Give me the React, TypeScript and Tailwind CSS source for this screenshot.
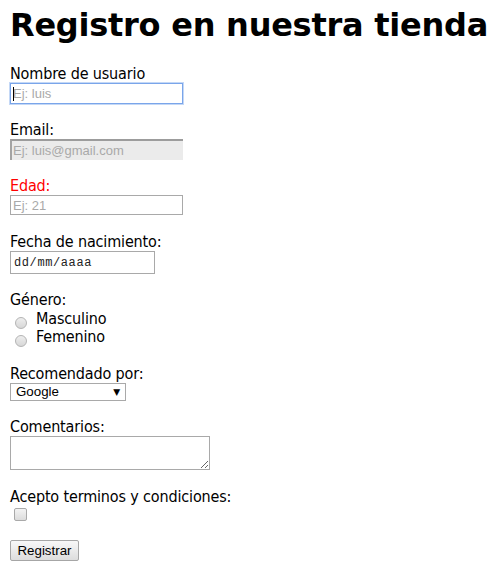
import { useState } from "react";

const labelFont = { fontFamily: '"DejaVu Sans Condensed", "DejaVu Sans", sans-serif' };

export default function App() {
    const [genero, setGenero] = useState("");
    const [acepto, setAcepto] = useState(false);

    return (
        <div className="min-h-[577px] bg-white px-[10px] pt-[7px] text-black">
            <h1 className="whitespace-nowrap text-[32px] font-bold leading-[37px] tracking-[-0.25px] font-['DejaVu_Sans',sans-serif]">
                Registro en nuestra tienda
            </h1>

            <form className="mt-[21px] text-[16px] leading-[18px] tracking-[-0.15px]" style={labelFont} onSubmit={(e) => e.preventDefault()}>
                {/* Nombre */}
                <label className="block h-[18px]">Nombre de usuario</label>
                <div className="relative w-[173px]">
                    <input
                        type="text"
                        placeholder="Ej: luis"
                        className="block h-[21px] w-[173px] border border-[#7aa5ea] px-[2px] text-[13px] tracking-normal font-['Liberation_Sans',sans-serif] shadow-[0_0_0_1px_#c4d8f6] outline-none placeholder:text-[#a9a9a9]"
                    />
                    <span className="absolute left-[3px] top-[4px] h-[14px] w-px bg-black" />
                </div>

                {/* Email */}
                <label className="mt-[17px] block h-[18px]">Email:</label>
                <input
                    type="email"
                    placeholder="Ej: luis@gmail.com"
                    readOnly
                    className="block h-[21px] w-[173px] border-l-2 border-t-2 border-l-[#a3a3a3] border-t-[#9c9c9c] bg-[#ebebeb] px-[1px] text-[13px] tracking-normal font-['Liberation_Sans',sans-serif] outline-none placeholder:text-[#a9a9a9]"
                />

                {/* Edad */}
                <label className="mt-[17px] block h-[18px] text-[#ff0000]">Edad:</label>
                <input
                    type="number"
                    placeholder="Ej: 21"
                    className="block h-[20px] w-[173px] border border-[#a9a9a9] px-[2px] text-[13px] tracking-normal font-['Liberation_Sans',sans-serif] outline-none placeholder:text-[#a9a9a9]"
                />

                {/* Fecha */}
                <label className="mt-[18px] block h-[18px]">Fecha de nacimiento:</label>
                <div className="flex h-[23px] w-[145px] items-center border border-[#a9a9a9] pl-[3px] text-[12px] tracking-[0.6px] font-['Liberation_Mono',monospace] text-[#222]">
                    dd/mm/aaaa
                </div>

                {/* Genero */}
                <label className="mt-[17px] block h-[18px]">Género:</label>
                <div className="mt-[1px] flex flex-col">
                    {["Masculino", "Femenino"].map((g) => (
                        <label key={g} className="flex h-[18px] items-start">
                            <input
                                type="radio"
                                name="genero"
                                checked={genero === g}
                                onChange={() => setGenero(g)}
                                className="ml-[5px] mr-[9px] mt-[7px] h-[12px] w-[12px] shrink-0 appearance-none rounded-full border border-[#b4b4b4] bg-gradient-to-b from-[#eeeeee] to-[#d7d7d7] checked:bg-[#555]"
                            />
                            <span className="leading-[18px]">{g}</span>
                        </label>
                    ))}
                </div>

                {/* Recomendado */}
                <label className="mt-[19px] block h-[18px]">Recomendado por:</label>
                <div className="relative w-[116px]">
                    <select className="block h-[18px] w-[116px] appearance-none border border-[#a9a9a9] bg-white pl-[5px] text-[13.33px] leading-[16px] tracking-normal font-['Liberation_Sans',sans-serif] text-black outline-none">
                        <option>Google</option>
                        <option>Amigo</option>
                        <option>Otro</option>
                    </select>
                    <span className="pointer-events-none absolute right-[6px] top-[3px] text-[9px] leading-[12px] font-['DejaVu_Sans',sans-serif]">
                        ▼
                    </span>
                </div>

                {/* Comentarios */}
                <label className="mt-[17px] block h-[18px]">Comentarios:</label>
                <textarea className="block h-[34px] w-[200px] border border-[#a9a9a9] text-[13px] font-['Liberation_Mono',monospace] outline-none" />

                {/* Acepto */}
                <label className="mt-[18px] block h-[18px]">Acepto terminos y condiciones:</label>
                <input
                    type="checkbox"
                    checked={acepto}
                    onChange={(e) => setAcepto(e.target.checked)}
                    className="ml-[4px] mt-[2px] block h-[13px] w-[13px] appearance-none rounded-[2px] border border-[#a9a9a9] bg-gradient-to-b from-[#f3f3f3] to-[#dcdcdc] checked:bg-[#555]"
                />

                {/* Registrar */}
                <button
                    type="submit"
                    className="mt-[19px] block h-[21px] w-[69px] rounded-[2px] border border-[#a6a6a6] bg-gradient-to-b from-[#f8f8f8] to-[#dddddd] text-[13.33px] tracking-normal font-['Liberation_Sans',sans-serif] text-black"
                >
                    Registrar
                </button>
            </form>
        </div>
    );
}
